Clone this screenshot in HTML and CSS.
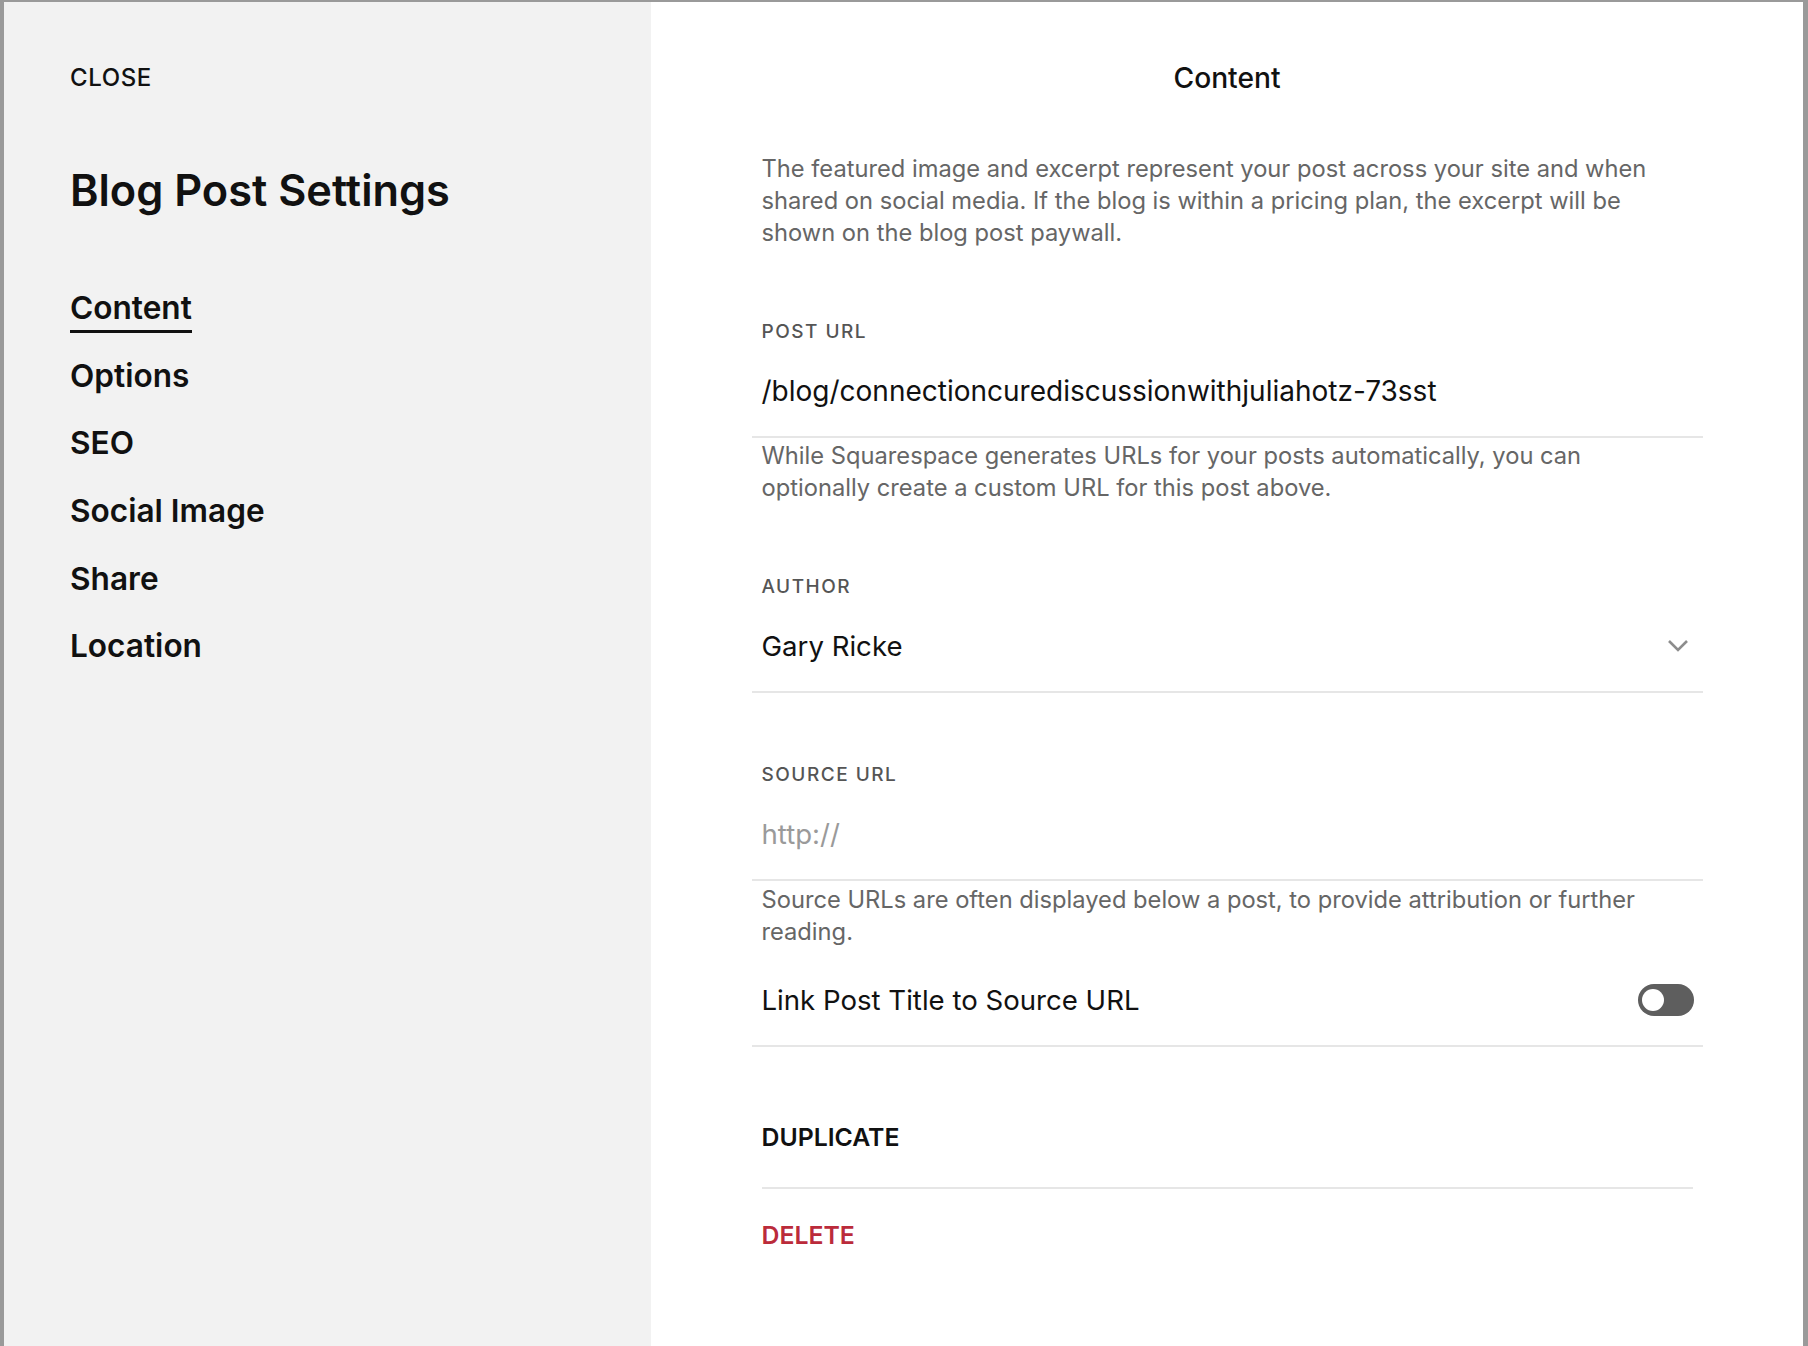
FILE: index.html
```html
<!DOCTYPE html>
<html lang="en">
<head>
<meta charset="utf-8">
<title>Blog Post Settings</title>
<link rel="stylesheet" href="styles.css">
</head>
<body>
<div class="modal">
  <aside class="sidebar">
    <div class="close">CLOSE</div>
    <h1 class="title">Blog Post Settings</h1>
    <nav class="nav">
      <a class="nav-item active">Content</a>
      <a class="nav-item">Options</a>
      <a class="nav-item">SEO</a>
      <a class="nav-item">Social Image</a>
      <a class="nav-item">Share</a>
      <a class="nav-item">Location</a>
    </nav>
  </aside>
  <main class="panel">
    <h2 class="heading">Content</h2>
    <div class="form">
      <p class="intro">The featured image and excerpt represent your post across your site and when shared on social media. If the blog is within a pricing plan, the excerpt will be shown on the blog post paywall.</p>

      <div class="field field-url">
        <div class="label">POST URL</div>
        <div class="value value-url">/blog/connectioncurediscussionwithjuliahotz-73sst</div>
      </div>
      <p class="help help-url">While Squarespace generates URLs for your posts automatically, you can optionally create a custom URL for this post above.</p>

      <div class="field field-author">
        <div class="label">AUTHOR</div>
        <div class="value-row">
          <div class="value">Gary Ricke</div>
          <svg class="chevron" width="22" height="14" viewBox="0 0 22 14"><polyline points="2,2 11,11 20,2" fill="none" stroke="#8d8d8d" stroke-width="2.6"/></svg>
        </div>
      </div>

      <div class="field field-source">
        <div class="label">SOURCE URL</div>
        <div class="value placeholder">http://</div>
      </div>
      <p class="help help-source">Source URLs are often displayed below a post, to provide attribution or further reading.</p>

      <div class="toggle-row">
        <div class="value">Link Post Title to Source URL</div>
        <div class="toggle"><span class="knob"></span></div>
      </div>

      <div class="action action-dup">DUPLICATE</div>
      <div class="action action-del">DELETE</div>
    </div>
  </main>
</div>
</body>
</html>
```
FILE: styles.css
```css
html, body {
  margin: 0;
  padding: 0;
  height: 100%;
}
body {
  background: #9a9a9a;
  font-family: "Inter", "Liberation Sans", sans-serif;
  color: #111;
  overflow: hidden;
}
.modal {
  display: flex;
  margin: 2px 5px 0 4px;
  height: calc(100% - 2px);
}
.sidebar {
  width: 647px;
  flex: none;
  background: #f2f2f2;
  box-sizing: border-box;
  padding: 61.3px 0 0 66px;
}
.close {
  font-size: 24px;
  line-height: 30px;
  font-weight: 500;
  letter-spacing: 0.6px;
}
.title {
  margin: 71px 0 0;
  font-size: 43.3px;
  line-height: 52px;
  font-weight: 600;
}
.nav {
  display: flex;
  flex-direction: column;
  align-items: flex-start;
  gap: 20.7px;
  margin-top: 69.6px;
}
.nav-item {
  font-size: 31.6px;
  line-height: 44px;
  font-weight: 600;
  border-bottom: 3.5px solid transparent;
}
.nav-item.active {
  border-bottom-color: #111;
}
.panel {
  flex: 1;
  background: #fff;
  padding-top: 58px;
  display: flex;
  flex-direction: column;
  align-items: center;
}
.heading {
  margin: 0;
  font-size: 28.2px;
  line-height: 36px;
  font-weight: 500;
}
.form {
  width: 951px;
  margin-top: 57px;
}
.intro, .help {
  margin: 0;
  padding: 0 10px;
  font-size: 23.7px;
  line-height: 32px;
  color: #666;
}
.label {
  font-size: 19px;
  line-height: 24px;
  font-weight: 500;
  letter-spacing: 1.5px;
  color: #555;
}
.value {
  font-size: 27.6px;
  line-height: 36px;
}
.value-url {
  font-size: 28px;
}
.field {
  padding: 0 10px 27.4px;
  border-bottom: 2px solid #e6e6e6;
}
.field-url {
  margin-top: 71px;
}
.field-url .value {
  margin-top: 28.6px;
}
.help-url {
  margin-top: 1.7px;
}
.field-author {
  margin-top: 71.7px;
  padding-bottom: 27.3px;
}
.value-row {
  margin-top: 28.4px;
  display: flex;
  align-items: center;
  justify-content: space-between;
  padding-right: 4px;
}
.field-source {
  margin-top: 69.8px;
  padding-bottom: 27px;
}
.field-source .value {
  margin-top: 29px;
}
.placeholder {
  color: #9a9a9a;
}
.help-source {
  margin-top: 3.4px;
}
.toggle-row {
  margin-top: 33.8px;
  padding: 0 9px 26.8px 10px;
  border-bottom: 2px solid #e6e6e6;
  display: flex;
  align-items: center;
  justify-content: space-between;
}
.toggle {
  width: 56px;
  height: 32px;
  border-radius: 16px;
  background: #5e5e5e;
  position: relative;
}
.knob {
  position: absolute;
  left: 4px;
  top: 5px;
  width: 22px;
  height: 22px;
  border-radius: 50%;
  background: #fff;
}
.action {
  margin: 0 10px;
  font-size: 24.8px;
  line-height: 30px;
  font-weight: 600;
}
.action-dup {
  margin-top: 75px;
  padding-bottom: 35px;
  border-bottom: 2px solid #e6e6e6;
}
.action-del {
  margin-top: 31.6px;
  color: #bb2b3b;
}
```
